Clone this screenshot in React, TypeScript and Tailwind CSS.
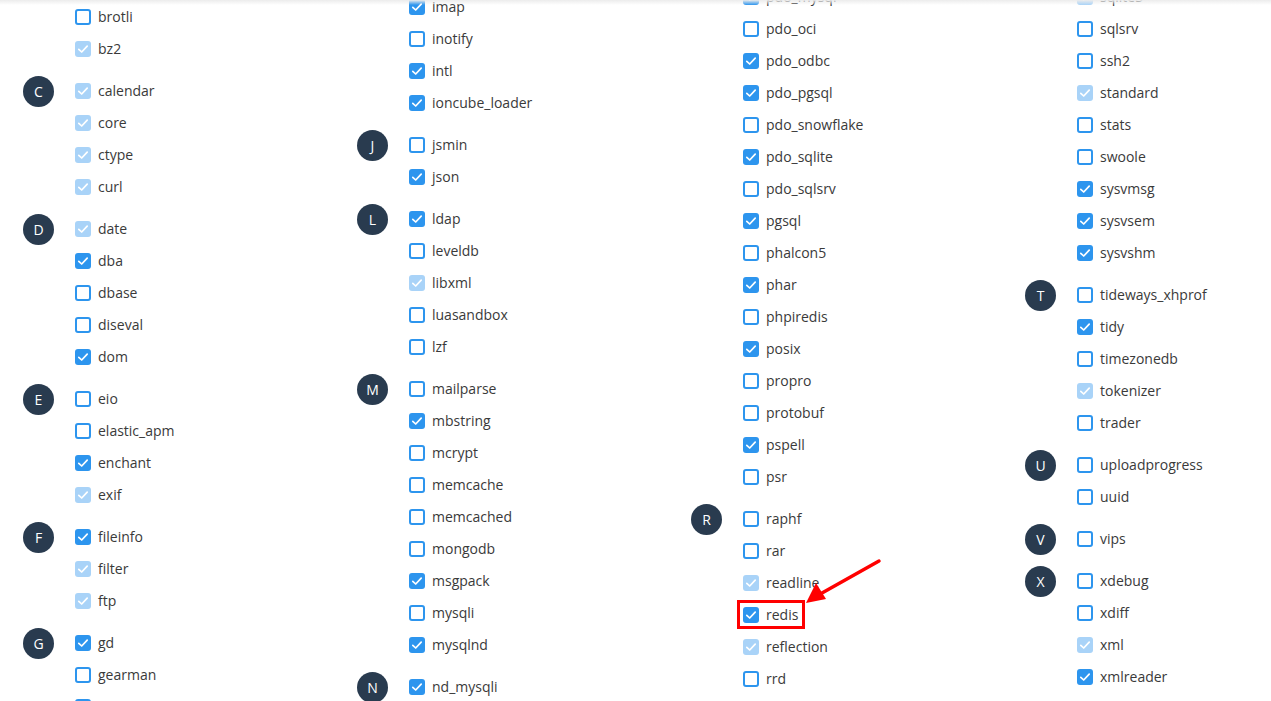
import React from "react";

type S = "u" | "c" | "d";
type Group = { letter?: string; items: [string, S][] };
type Col = { top: string; groups: Group[] };

const cols: Col[] = [
  {
    top: "mt-[0px]",
    groups: [
      { items: [["brotli", "u"], ["bz2", "d"]] },
      { letter: "C", items: [["calendar", "d"], ["core", "d"], ["ctype", "d"], ["curl", "d"]] },
      { letter: "D", items: [["date", "d"], ["dba", "c"], ["dbase", "u"], ["diseval", "u"], ["dom", "c"]] },
      { letter: "E", items: [["eio", "u"], ["elastic_apm", "u"], ["enchant", "c"], ["exif", "d"]] },
      { letter: "F", items: [["fileinfo", "c"], ["filter", "d"], ["ftp", "d"]] },
      { letter: "G", items: [["gd", "c"], ["gearman", "u"], ["gettext", "c"]] },
    ],
  },
  {
    top: "mt-[-10px]",
    groups: [
      { items: [["imap", "c"], ["inotify", "u"], ["intl", "c"], ["ioncube_loader", "c"]] },
      { letter: "J", items: [["jsmin", "u"], ["json", "c"]] },
      { letter: "L", items: [["ldap", "c"], ["leveldb", "u"], ["libxml", "d"], ["luasandbox", "u"], ["lzf", "u"]] },
      {
        letter: "M",
        items: [
          ["mailparse", "u"], ["mbstring", "c"], ["mcrypt", "u"], ["memcache", "u"], ["memcached", "u"],
          ["mongodb", "u"], ["msgpack", "c"], ["mysqli", "u"], ["mysqlnd", "c"],
        ],
      },
      { letter: "N", items: [["nd_mysqli", "c"], ["nd_pdo_mysql", "c"]] },
    ],
  },
  {
    top: "mt-[-20px]",
    groups: [
      {
        items: [
          ["pdo_mysql", "c"], ["pdo_oci", "u"], ["pdo_odbc", "c"], ["pdo_pgsql", "c"], ["pdo_snowflake", "u"],
          ["pdo_sqlite", "c"], ["pdo_sqlsrv", "u"], ["pgsql", "c"], ["phalcon5", "u"], ["phar", "c"],
          ["phpiredis", "u"], ["posix", "c"], ["propro", "u"], ["protobuf", "u"], ["pspell", "c"], ["psr", "u"],
        ],
      },
      { letter: "R", items: [["raphf", "u"], ["rar", "u"], ["readline", "d"], ["redis", "c"], ["reflection", "d"], ["rrd", "u"]] },
    ],
  },
  {
    top: "mt-[-20px]",
    groups: [
      {
        items: [
          ["sqlite3", "d"], ["sqlsrv", "u"], ["ssh2", "u"], ["standard", "d"], ["stats", "u"], ["swoole", "u"],
          ["sysvmsg", "c"], ["sysvsem", "c"], ["sysvshm", "c"],
        ],
      },
      { letter: "T", items: [["tideways_xhprof", "u"], ["tidy", "c"], ["timezonedb", "u"], ["tokenizer", "d"], ["trader", "u"]] },
      { letter: "U", items: [["uploadprogress", "u"], ["uuid", "u"]] },
      { letter: "V", items: [["vips", "u"]] },
      { letter: "X", items: [["xdebug", "u"], ["xdiff", "u"], ["xml", "d"], ["xmlreader", "c"]] },
    ],
  },
];

function Box({ s }: { s: S }) {
  if (s === "u") {
    return <span className="block w-4 h-4 rounded-[3px] border-2 border-[#2d95ee] bg-white shrink-0" />;
  }
  return (
    <span
      className={
        "flex items-center justify-center w-4 h-4 rounded-[3px] shrink-0 " +
        (s === "c" ? "bg-[#2d95ee]" : "bg-[#a9d3f8]")
      }
    >
      <svg width="16" height="16" viewBox="0 0 16 16" fill="none">
        <path d="M3.8 8.3 L6.7 11 L12.2 5.2" stroke="white" strokeWidth="1.7" strokeLinecap="round" strokeLinejoin="round" />
      </svg>
    </span>
  );
}

function Row({ name, s }: { name: string; s: S }) {
  const hl = name === "redis";
  return (
    <div className="relative flex items-center h-8">
      <Box s={s} />
      <span className="ml-[7px] text-[14px] text-[#3a3a3a] leading-none">{name}</span>
      {hl && (
        <span className="absolute left-[-6px] top-[1px] w-[68px] h-[29px] border-[3px] border-[#ff0000] pointer-events-none" />
      )}
    </div>
  );
}

export default function App() {
  return (
    <div
      className="relative w-[1271px] h-[701px] overflow-hidden bg-white"
      style={{ fontFamily: '"Open Sans", "Liberation Sans", sans-serif' }}
    >
      <div className="grid grid-cols-[repeat(4,334px)] pt-px">
        {cols.map((c, ci) => (
          <div key={ci} className={"flex flex-col gap-[10px] " + c.top}>
            {c.groups.map((g, gi) => (
              <div key={gi} className="flex items-start">
                <div className="w-[75px] shrink-0 pl-[23px] pt-[0.5px]">
                  {g.letter && (
                    <div className="w-[31px] h-[31px] rounded-full bg-[#293b4f] text-white text-[14px] flex items-center justify-center">
                      {g.letter}
                    </div>
                  )}
                </div>
                <div className="flex flex-col">
                  {g.items.map(([n, s]) => (
                    <Row key={n} name={n} s={s} />
                  ))}
                </div>
              </div>
            ))}
          </div>
        ))}
      </div>
      <div className="absolute left-0 top-0 w-full h-[5px] bg-gradient-to-b from-[#ececec] to-transparent pointer-events-none" />
      <svg className="absolute left-0 top-0 pointer-events-none" width="1271" height="701">
        <line x1="879" y1="561" x2="822" y2="593" stroke="#ff0000" strokeWidth="3.5" strokeLinecap="round" />
        <polygon points="806,603 816,583 826,599" fill="#ff0000" />
      </svg>
    </div>
  );
}
